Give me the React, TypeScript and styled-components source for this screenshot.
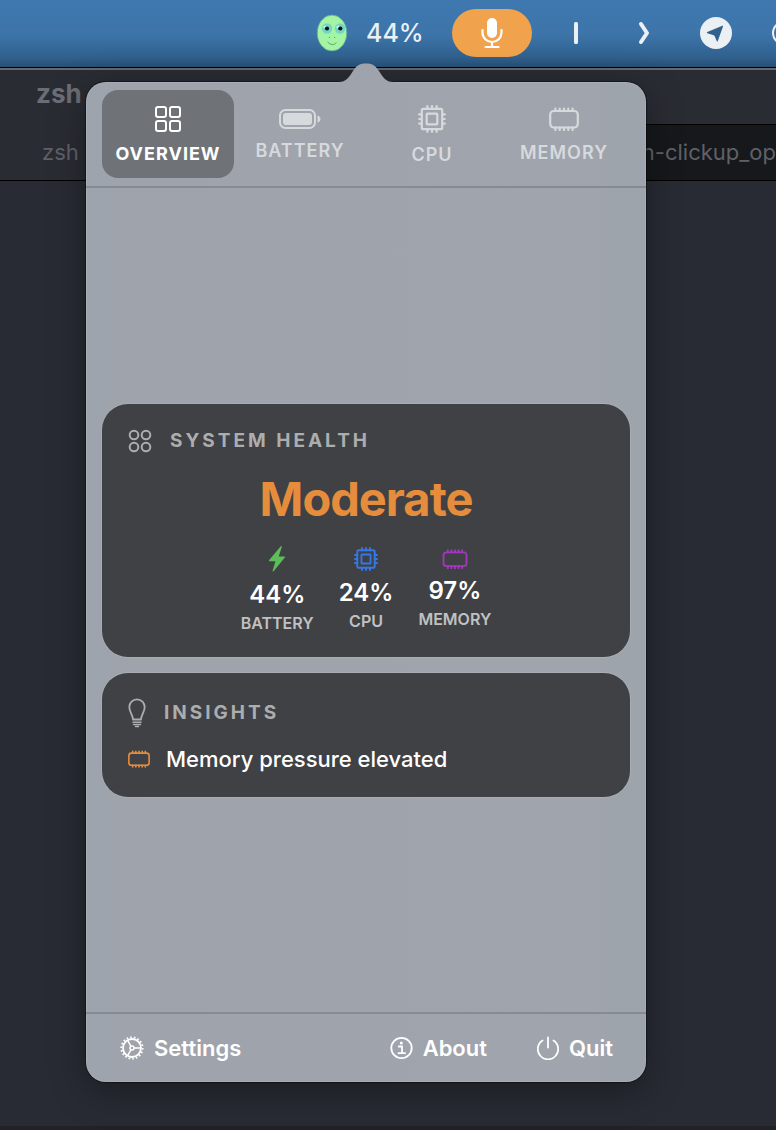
import React from 'react';
import styled, { createGlobalStyle } from 'styled-components';

const GlobalStyle = createGlobalStyle`
  *, *::before, *::after { box-sizing: border-box; }
  body { margin: 0; background: #282b33; font-family: Inter, "Liberation Sans", sans-serif; }
  button { font: inherit; color: inherit; border: 0; padding: 0; background: none; cursor: pointer; }
  h2, p, ul { margin: 0; padding: 0; font-weight: inherit; list-style: none; }
  svg { display: block; flex: none; }
`;

const Desktop = styled.div`
  min-height: 100vh;
  display: flex;
  flex-direction: column;
  overflow: hidden;
`;

const MenuBar = styled.header`
  height: 68px;
  padding: 0 0 2px 316px;
  display: flex;
  align-items: center;
  color: #ebf0f5;
  background: linear-gradient(#3e78af 0%, #3d75aa 50%, #30618f 85%, #274f75 100%);
  border-bottom: 1px solid #000;
`;

const MenuItem = styled.button<{ $space: number }>`
  flex: none;
  display: flex;
  align-items: center;
  margin-left: ${(p) => p.$space}px;
`;

const MonitorItem = styled(MenuItem)`
  gap: 18px;
  font-size: 25px;
  line-height: 32px;
  font-weight: 500;
`;

const MicPill = styled(MenuItem)`
  width: 80px;
  height: 48px;
  border-radius: 24px;
  justify-content: center;
  background: #f0a24d;
  color: #fff;
`;

const Workspace = styled.main`
  flex: 1;
  display: grid;
  grid-template-columns: minmax(0, 1fr);
`;

const Terminal = styled.section`
  grid-area: 1 / 1;
  display: flex;
  flex-direction: column;
  background: #282b33;
  border-top: 2px solid #67696e;
  border-bottom: 4px solid #202228;
`;

const TitleBar = styled.div`
  height: 54px;
  padding: 8px 36px;
  background: #2a2c34;
  font-size: 26px;
  line-height: 32px;
  font-weight: 700;
  color: #6c6e75;
`;

const TerminalTabs = styled.div`
  height: 57px;
  display: flex;
  border-bottom: 1px solid #000;
  font-size: 22px;
  line-height: 28px;
  color: #5f6168;
`;

const TerminalTab = styled.button<{ $active?: boolean }>`
  flex: 1;
  text-align: ${(p) => (p.$active ? 'left' : 'right')};
  padding: 0 0 2px ${(p) => (p.$active ? 42 : 0)}px;
  white-space: nowrap;
  background: ${(p) => (p.$active ? '#2a2c34' : '#17181b')};
  border-top: 1px solid ${(p) => (p.$active ? '#2a2c34' : '#000')};
`;

const Popover = styled.section`
  grid-area: 1 / 1;
  position: relative;
  width: 560px;
  max-width: calc(100% - 86px);
  margin: 14px 0 48px 86px;
  display: flex;
  flex-direction: column;
  border-radius: 20px;
  color: #fff;
  background: linear-gradient(90deg, #9da4ac 0%, #9fa3ac 9%, #a0a4ac 90%, #9da4ac 100%);
  box-shadow: 0 0 1px 1px rgba(0, 0, 0, 0.4), 0 8px 36px rgba(0, 0, 0, 0.35),
    inset 0 0 0 1px rgba(255, 255, 255, 0.1);
`;

const Arrow = styled.svg`
  position: absolute;
  left: 50%;
  top: -19px;
  transform: translateX(-50%);
`;

const TabBar = styled.nav`
  display: flex;
  padding: 8px 16px;
  border-bottom: 2px solid #868a93;
`;

const Tab = styled.button<{ $active?: boolean }>`
  flex: 1;
  min-width: 0;
  height: 88px;
  padding-top: 3px;
  display: flex;
  flex-direction: column;
  align-items: center;
  justify-content: center;
  gap: 11px;
  border-radius: 16px;
  font-size: 18px;
  line-height: 22px;
  font-weight: ${(p) => (p.$active ? 700 : 600)};
  letter-spacing: 1px;
  background: ${(p) => (p.$active ? '#6f7378' : 'transparent')};
  color: ${(p) => (p.$active ? '#fff' : '#d7dadd')};
`;

const Content = styled.div`
  flex: 1;
  display: flex;
  flex-direction: column;
  justify-content: center;
  gap: 16px;
  padding: 16px;
`;

const Card = styled.article`
  display: flex;
  flex-direction: column;
  gap: 17px;
  padding: 25px 26px 24px;
  border-radius: 26px;
  background: #404144;
  box-shadow: 0 0 0 1px rgba(255, 255, 255, 0.1);
`;

const CardHeader = styled.div`
  display: flex;
  align-items: center;
  gap: 18px;
  color: #acadae;
`;

const CardTitle = styled.h2`
  font-size: 19px;
  line-height: 24px;
  font-weight: 700;
  letter-spacing: 3px;
`;

const Status = styled.p`
  font-size: 47px;
  line-height: 58px;
  font-weight: 700;
  letter-spacing: -1px;
  text-align: center;
  color: #e68d3d;
`;

const Stats = styled.ul`
  display: flex;
  justify-content: center;
  align-items: center;
  gap: 25px;
`;

const Stat = styled.li`
  display: flex;
  flex-direction: column;
  align-items: center;
`;

const StatValue = styled.span`
  margin-top: 7px;
  font-size: 24px;
  line-height: 30px;
  font-weight: 600;
`;

const StatLabel = styled.span`
  margin-top: 3px;
  font-size: 16px;
  line-height: 20px;
  font-weight: 600;
  color: #c0c1c2;
`;

const Insight = styled.p`
  display: flex;
  align-items: center;
  gap: 16px;
  font-size: 22px;
  line-height: 28px;
  font-weight: 500;
`;

const Footer = styled.footer`
  height: 70px;
  padding: 0 33px 0 34px;
  display: flex;
  align-items: center;
  gap: 50px;
  border-top: 2px solid #868a93;
`;

const Action = styled.button<{ $push?: boolean }>`
  display: flex;
  align-items: center;
  gap: 10px;
  margin-right: ${(p) => (p.$push ? 'auto' : '0')};
  font-size: 22px;
  line-height: 28px;
  font-weight: 600;
`;

function Face() {
  return (
    <svg width="32" height="38" viewBox="0 0 32 38" aria-hidden="true">
      <ellipse cx="16" cy="19" rx="14.8" ry="18" fill="#a3f5a4" stroke="#5f9f92" strokeWidth="0.8" />
      <circle cx="11" cy="14.5" r="5.2" fill="#72d6c6" />
      <circle cx="24" cy="14.5" r="5.2" fill="#72d6c6" />
      <circle cx="9" cy="13" r="1.6" fill="#c6f2ec" />
      <circle cx="22" cy="13" r="1.6" fill="#c6f2ec" />
      <circle cx="11" cy="14.5" r="2.1" fill="#07100f" />
      <circle cx="24.3" cy="14.5" r="2.1" fill="#07100f" />
      <circle cx="13.4" cy="23.3" r="0.6" fill="#4f9060" />
      <circle cx="18.6" cy="23.3" r="0.6" fill="#4f9060" />
      <path d="M11.5 28q5 5 9 .5" fill="none" stroke="#5fa96b" strokeWidth="1" />
    </svg>
  );
}

function Mic() {
  return (
    <svg width="24" height="32" viewBox="0 0 24 32" fill="none" stroke="#fff" strokeWidth="2.2" strokeLinecap="round">
      <rect x="7" y="1" width="10" height="20" rx="5" fill="#fff" stroke="none" />
      <path d="M2.500 13v2.500a9.500 9.500 0 0 0 19 0V13M12 25v5M5.500 30h13" />
    </svg>
  );
}

function Telegram() {
  return (
    <svg width="32" height="32" viewBox="0 0 32 32">
      <circle cx="16" cy="16" r="16" fill="#ebf0f5" />
      <path d="M7.300 15 22.300 8.800q1-.4.7.8L17.800 24q-.6 1.200-1.100 0l-2-4.700q-.3-.7-1-1L7.300 16.200q-1-.6 0-1.200Z" fill="#33618e" />
    </svg>
  );
}

function GridIcon() {
  return (
    <svg width="26" height="26" viewBox="0 0 26 26" fill="none" stroke="currentColor" strokeWidth="2">
      {[1, 15].map((x) => [1, 15].map((y) => <rect key={`${x}-${y}`} x={x} y={y} width="10" height="10" rx="2" />))}
    </svg>
  );
}

function CirclesIcon() {
  return (
    <svg width="24" height="24" viewBox="0 0 24 24" fill="none" stroke="currentColor" strokeWidth="2">
      {[6, 18].map((x) => [6, 18].map((y) => <circle key={`${x}-${y}`} cx={x} cy={y} r="4.300" />))}
    </svg>
  );
}

function BatteryIcon() {
  return (
    <svg width="42" height="20" viewBox="0 0 42 20" fill="none" stroke="currentColor">
      <rect x="1" y="1" width="35" height="18" rx="5.500" strokeWidth="2" />
      <rect x="4" y="4" width="29" height="12" rx="3" fill="currentColor" stroke="none" />
      <path d="M38.500 6.500q3 1 3 3.500t-3 3.500Z" fill="currentColor" stroke="none" />
    </svg>
  );
}

function CpuIcon({ size, color = 'currentColor' }: { size: number; color?: string }) {
  return (
    <svg width={size} height={size} viewBox="0 0 28 28" fill="none" stroke={color} strokeWidth="2.200" strokeLinecap="round">
      <rect x="3.800" y="3.800" width="20.400" height="20.400" rx="1.500" />
      <rect x="8.700" y="8.700" width="10.600" height="10.600" rx="0.500" />
      {[9.4, 14, 18.6].map((p) => (
        <path key={p} d={`M${p} 4V1.200M${p} 24v2.800M4 ${p}H1.200M24 ${p}h2.800`} />
      ))}
    </svg>
  );
}

function MemoryIcon({ width, height, color = 'currentColor' }: { width: number; height: number; color?: string }) {
  return (
    <svg width={width} height={height} viewBox="0 0 30 24" fill="none" stroke={color} strokeWidth="2.200" strokeLinecap="round">
      <rect x="1.200" y="4" width="27.600" height="16.500" rx="3.500" />
      {[6.4, 10.7, 15, 19.3, 23.6].map((p) => (
        <path key={p} d={`M${p} 4V1.500M${p} 20.500V23`} />
      ))}
    </svg>
  );
}

function BoltIcon() {
  return (
    <svg width="18" height="28" viewBox="0 0 18 28">
      <path d="M12.800 1.200 1 15.300q-.5.900.5.900h6L4.600 25.700q-.1 1.500 1 .5L17 12.300q.5-.9-.5-.9h-5.800L13.800 2q.1-1.500-1-.8Z" fill="#5ebd5b" />
    </svg>
  );
}

function BulbIcon() {
  return (
    <svg width="18" height="30" viewBox="0 0 18 30" fill="none" stroke="currentColor" strokeWidth="1.800" strokeLinecap="round">
      <path d="M5 21.500C5 17.500 1.300 14 1.300 9a7.700 7.700 0 0 1 15.400 0c0 5-3.700 8.500-3.700 12.500Z" strokeLinejoin="round" />
      <path d="M5 24.200h8M5.500 26.400h7M7.500 28.400h3" strokeWidth="1.500" />
    </svg>
  );
}

function GearIcon() {
  return (
    <svg width="24" height="24" viewBox="0 0 24 24" fill="none" stroke="currentColor" strokeWidth="1.800">
      <circle cx="12" cy="12" r="9" />
      <circle cx="12" cy="12" r="10.700" strokeWidth="1.800" pathLength="36" strokeDasharray="0.900 1.100" />
      <circle cx="12" cy="12" r="2" strokeWidth="1.500" />
      <path d="M14 12h7M11 10.300 7.500 4.200M11 13.700l-3.500 6.100" strokeWidth="1.500" />
    </svg>
  );
}

function InfoIcon() {
  return (
    <svg width="23" height="24" viewBox="0 0 23 24" fill="none" stroke="currentColor" strokeWidth="1.800">
      <circle cx="11.500" cy="12" r="10.200" />
      <circle cx="11.300" cy="7" r="1.500" fill="currentColor" stroke="none" />
      <path d="M8.800 10.500h3.200v6.600M8.500 17.200h6.600" strokeLinecap="round" />
    </svg>
  );
}

function PowerIcon() {
  return (
    <svg width="22" height="24" viewBox="0 0 22 24" fill="none" stroke="currentColor" strokeWidth="1.800" strokeLinecap="round">
      <path d="M11 1.500v10M5.500 4.500a10.200 10.200 0 1 0 11 0" />
    </svg>
  );
}

const tabs = [
  { label: 'OVERVIEW', icon: <GridIcon /> },
  { label: 'BATTERY', icon: <BatteryIcon /> },
  { label: 'CPU', icon: <CpuIcon size={28} /> },
  { label: 'MEMORY', icon: <MemoryIcon width={30} height={24} /> },
];

const stats = [
  { label: 'BATTERY', value: '44%', icon: <BoltIcon /> },
  { label: 'CPU', value: '24%', icon: <CpuIcon size={24} color="#3478e5" /> },
  { label: 'MEMORY', value: '97%', icon: <MemoryIcon width={26} height={20} color="#a336bf" /> },
];

export default function App() {
  return (
    <>
      <GlobalStyle />
      <Desktop>
        <MenuBar>
          <MonitorItem $space={0}>
            <Face />
            44%
          </MonitorItem>
          <MicPill $space={28} aria-label="Microphone">
            <Mic />
          </MicPill>
          <MenuItem $space={42} aria-label="Separator">
            <svg width="4" height="22"><rect width="4" height="22" rx="1.500" fill="currentColor" /></svg>
          </MenuItem>
          <MenuItem $space={60} aria-label="Show more items">
            <svg width="12" height="24" viewBox="0 0 12 24" fill="none" stroke="currentColor" strokeWidth="4" strokeLinecap="round" strokeLinejoin="round">
              <path d="M3 3l6 9-6 9" />
            </svg>
          </MenuItem>
          <MenuItem $space={50} aria-label="Telegram">
            <Telegram />
          </MenuItem>
          <MenuItem $space={40} aria-label="Clock">
            <svg width="24" height="24" viewBox="0 0 24 24" fill="none" stroke="currentColor" strokeWidth="2">
              <circle cx="12" cy="12" r="11" />
            </svg>
          </MenuItem>
        </MenuBar>
        <Workspace>
          <Terminal>
            <TitleBar>zsh</TitleBar>
            <TerminalTabs>
              <TerminalTab $active>zsh</TerminalTab>
              <TerminalTab>n-clickup_op</TerminalTab>
            </TerminalTabs>
          </Terminal>
          <Popover>
            <Arrow width="56" height="20" viewBox="0 0 56 20" aria-hidden="true">
              <path d="M0 20v-1c9 0 11-5 15-11C19 2 22 .500 28 .500S37 2 41 8c4 6 6 11 15 11v1Z" fill="#9fa4ac" />
            </Arrow>
            <TabBar>
              {tabs.map((tab, i) => (
                <Tab key={tab.label} $active={i === 0}>
                  {tab.icon}
                  {tab.label}
                </Tab>
              ))}
            </TabBar>
            <Content>
              <Card>
                <CardHeader>
                  <CirclesIcon />
                  <CardTitle>SYSTEM HEALTH</CardTitle>
                </CardHeader>
                <Status>Moderate</Status>
                <Stats>
                  {stats.map((stat) => (
                    <Stat key={stat.label}>
                      {stat.icon}
                      <StatValue>{stat.value}</StatValue>
                      <StatLabel>{stat.label}</StatLabel>
                    </Stat>
                  ))}
                </Stats>
              </Card>
              <Card>
                <CardHeader>
                  <BulbIcon />
                  <CardTitle>INSIGHTS</CardTitle>
                </CardHeader>
                <Insight>
                  <MemoryIcon width={22} height={18} color="#e68d3d" />
                  Memory pressure elevated
                </Insight>
              </Card>
            </Content>
            <Footer>
              <Action $push>
                <GearIcon />
                Settings
              </Action>
              <Action>
                <InfoIcon />
                About
              </Action>
              <Action>
                <PowerIcon />
                Quit
              </Action>
            </Footer>
          </Popover>
        </Workspace>
      </Desktop>
    </>
  );
}
